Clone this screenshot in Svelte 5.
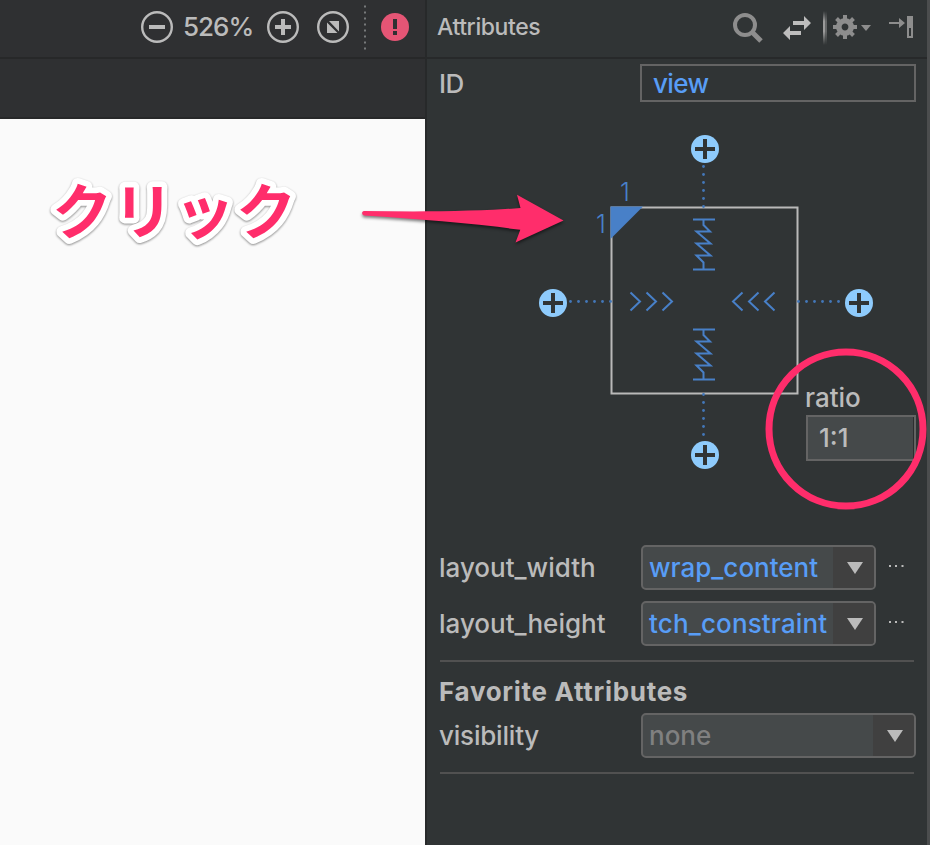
<script>
  const combos = [
    { label: 'layout_width', value: 'wrap_content' },
    { label: 'layout_height', value: 'tch_constraint' }
  ];
  const anchors = [[705, 149], [553, 303], [859, 303], [705, 455]];
  const steps = [0, 8, 16, 24, 32, 40];
  const dots = [
    ...steps.map((s) => [703.5, 166.5 + s]),
    ...steps.map((s) => [703.5, 394.5 + s]),
    ...steps.map((s) => [570.5 + s, 301.5]),
    ...steps.map((s) => [798.5 + s, 301.5])
  ];
  const teeth = [0, 45, 90, 135, 180, 225, 270, 315];
</script>

<div class="window">
  <section class="editor">
    <header class="tools">
      <svg width="32" height="32" viewBox="-16 -16 32 32">
        <circle r="14.8" class="ring" /><path d="M-8-2H8V2H-8z" fill="#bbb" />
      </svg>
      <span class="percent">526%</span>
      <svg width="32" height="32" viewBox="-16 -16 32 32">
        <circle r="14.8" class="ring" /><path d="M-8-2H-2V-8H2V-2H8V2H2V8H-2V2H-8z" fill="#bbb" />
      </svg>
      <svg class="fit" width="32" height="32" viewBox="-16 -16 32 32">
        <circle r="14.8" class="ring" /><path d="M-4-6H6V4.500zM-6-4.500V6H4.500z" fill="#bbb" />
      </svg>
      <svg class="sep" width="2" height="46"><path d="M1 1.500V46" stroke="#77797a" stroke-width="2" stroke-dasharray="2 4" /></svg>
      <svg class="error" width="28" height="28" viewBox="-14 -14 28 28">
        <circle r="14" fill="#e55575" /><path d="M-2-8H2V2H-2zM-2 4H2V8H-2z" fill="#2f3032" />
      </svg>
    </header>
    <div class="strip"></div>
    <div class="canvas"></div>
  </section>

  <section class="panel">
    <header class="title">
      <span class="heading">Attributes</span>
      <svg width="190" height="57" viewBox="727 0 190 57">
        <circle cx="745" cy="25" r="10" fill="none" stroke="#8d8d8d" stroke-width="4" />
        <path d="M752.500 32.500L761 41" stroke="#8d8d8d" stroke-width="5" />
        <path d="M793 21H804V16L811 23L804 30V25H793z M801 31H790V26L783 33L790 40V35H801z" fill="#bdbdbd" />
        <defs>
          <linearGradient id="fade" x1="0" y1="0" x2="0" y2="1">
            <stop offset="0" stop-color="#9b9b9b" stop-opacity="0" /><stop offset=".3" stop-color="#9b9b9b" />
            <stop offset=".6" stop-color="#9b9b9b" /><stop offset="1" stop-color="#9b9b9b" stop-opacity="0" />
          </linearGradient>
        </defs>
        <rect x="823" y="11" width="2" height="34" fill="url(#fade)" />
        <rect x="825" y="11" width="2" height="34" fill="url(#fade)" opacity=".5" />
        <g transform="translate(845 27)">
          <circle r="6.200" fill="none" stroke="#8d8d8d" stroke-width="5.600" />
          {#each teeth as a}<rect x="-2" y="-12" width="4" height="5" fill="#8d8d8d" transform="rotate({a})" />{/each}
        </g>
        <path d="M861 25H871L866 31z" fill="#8d8d8d" />
        <path d="M889 22H899V18L905 23L899 28V24H889z" fill="#8d8d8d" />
        <path d="M907 16H913V38H907zM909 28V36H911V28z" fill="#8d8d8d" fill-rule="evenodd" />
      </svg>
    </header>

    <div class="row id-row">
      <span class="label id">ID</span>
      <div class="field"><span>view</span></div>
    </div>

    <div class="inspector">
      <svg width="500" height="442" viewBox="427 102 500 442">
        <rect x="611.5" y="207.500" width="186" height="186" fill="none" stroke="#b9b9b9" stroke-width="2" />
        <path d="M610.500 206.500H643L610.500 239z" fill="#4880c8" />
        <text x="620" y="201" class="one">1</text>
        <text x="596" y="233" class="one">1</text>
        {#each dots as [x, y]}<circle cx={x} cy={y} r="1.400" fill="#4377b8" />{/each}
        {#each anchors as [x, y]}
          <g transform="translate({x} {y})">
            <circle r="14" fill="#8ecbfc" /><path d="M-10 0H10M0-10V10" stroke="#303435" stroke-width="4" />
          </g>
        {/each}
        {#each [0, 110] as dy}
          <path class="wire" transform="translate(0 {dy})" d="M693 219.500H715M703.500 219.500V225L710 231.500H696.500L710.500 243.500H696.500L710.500 255.500H696.500L703.500 262.500V269.500M693 269.500H715" />
        {/each}
        {#each [0, 16, 32] as dx}
          <path class="wire" d="M{630.5 + dx} 292.500L{640 + dx} 301.500L{630.5 + dx} 310.500" />
          <path class="wire" d="M{742.5 + dx} 292.500L{733 + dx} 301.500L{742.5 + dx} 310.500" />
        {/each}
      </svg>
      <div class="ratio">
        <span class="ratio-label">ratio</span>
        <div class="ratio-box">1:1</div>
      </div>
    </div>

    {#each combos as c}
      <div class="row combo-row">
        <span class="label">{c.label}</span>
        <div class="combo">
          <span class="value {c.value}">{c.value}</span>
          <span class="drop"><svg width="16" height="12"><path d="M0 0H16L8 12z" fill="#bbb" /></svg></span>
        </div>
        <svg class="more" width="15" height="2"><path d="M0 0H2V2H0zM6 0H8V2H6zM12.500 0H14.500V2H12.500z" fill="#bbb" /></svg>
      </div>
    {/each}

    <hr />
    <h2><span>Favorite Attributes</span></h2>
    <div class="row vis-row">
      <span class="label visibility">visibility</span>
      <div class="combo wide">
        <span class="value none">none</span>
        <span class="drop"><svg width="16" height="12"><path d="M0 0H16L8 12z" fill="#bbb" /></svg></span>
      </div>
    </div>
    <hr class="last" />
  </section>
  <div class="edge"></div>

  <svg class="notes" width="930" height="845">
    <text class="click" x="52" y="234">クリック</text>
    <path class="arrow" d="M364 211C420 212 480 211.500 520.500 208L517 194.800L563.500 220.500L515.500 242.500L520.300 229.700C470 223 420 219 364 215.500C361.500 215 361.500 211 364 211z" />
    <circle cx="846" cy="429" r="77" fill="none" stroke="#ff2d6b" stroke-width="7" />
  </svg>
</div>

<style>
  :global(body) { margin: 0; }
  .window {
    position: relative; display: flex; width: 930px; height: 845px; overflow: hidden;
    background: #303435; color: #bbb; font: 450 26px/32px Inter, "Noto Sans CJK JP", sans-serif;
  }
  svg { display: block; flex: none; }
  .editor { width: 425px; border-right: 2px solid #27292a; background: #2f3032; display: flex; flex-direction: column; }
  .tools { box-sizing: border-box; height: 59px; border-bottom: 2px solid #272829; padding: 0 0 3px 141px; display: flex; align-items: center; }
  .ring { fill: none; stroke: #bbb; stroke-width: 2.4; }
  .percent { width: 68px; margin: 0 16px 0 10px; white-space: nowrap; letter-spacing: -1px; }
  .fit { margin-left: 18px; }
  .sep { margin-left: 15px; }
  .error { margin-left: 15px; }
  .strip { height: 58px; border-bottom: 2px solid #272829; }
  .canvas { flex: 1; background: #fafafa; }

  .panel { width: 500px; display: flex; flex-direction: column; }
  .title { height: 57px; border-bottom: 2px solid #27292a; display: flex; justify-content: space-between; padding: 0 10px; }
  .heading { font-size: 23px; line-height: 54px; letter-spacing: -.4px; }
  .row { display: flex; padding-left: 12px; white-space: nowrap; }
  .label { width: 202px; flex: none; }
  .id-row { padding-top: 5px; height: 38px; }
  .id { width: 201px; line-height: 40px; letter-spacing: -.5px; }
  .field { box-sizing: border-box; width: 276px; height: 38px; border: 2px solid #646464; padding-left: 11px; line-height: 35px; color: #589df6; letter-spacing: -.6px; }
  .inspector { position: relative; height: 442px; }
  .one { font-size: 25px; font-weight: 300; fill: #4880c8; }
  .wire { fill: none; stroke: #4880c8; stroke-width: 2; }
  .ratio { position: absolute; left: 378px; top: 280px; }
  .ratio-label { display: block; height: 33px; }
  .ratio-box { box-sizing: border-box; width: 110px; height: 46px; margin-left: 1px; border: 2px solid #646464; box-shadow: inset -1px 0 #2c2e2f; background: #45494a; padding-left: 11px; line-height: 42px; }
  .combo-row { height: 56px; }
  .combo-row .label, .vis-row .label { line-height: 47px; }
  .combo { box-sizing: border-box; width: 235px; height: 45px; margin-top: 1px; border: 2px solid #646464; border-radius: 5px; background: #45494a; display: flex; justify-content: space-between; overflow: hidden; }
  .wide { width: 275px; }
  .value { padding-left: 6px; line-height: 41px; color: #589df6; }
  .tch_constraint { letter-spacing: .15px; }
  .drop { width: 41px; background: #404040; display: flex; align-items: center; padding-left: 14px; box-sizing: border-box; }
  .more { margin: 21px 0 0 13px; }
  .visibility { letter-spacing: -.2px; }
  .none { color: #808080; }
  hr { box-sizing: border-box; width: 474px; height: 2px; border: 0; background: #515151; margin: 4px 0 0 13px; flex: none; }
  h2 { margin: 0 0 0 12px; font-size: 26px; font-weight: 700; line-height: 32px; height: 36px; padding-top: 14px; white-space: nowrap; letter-spacing: .7px; }
  .vis-row { height: 47px; }
  .last { margin-top: 13px; }
  .edge { width: 3px; background: #4b4d4e; }
  .notes { position: absolute; inset: 0; }
  .click {
    font: 700 60.3px "Noto Sans CJK JP", sans-serif; letter-spacing: 1px; fill: #ff2d6b; stroke: #fff; stroke-width: 11.5px;
    stroke-linejoin: round; paint-order: stroke; filter: drop-shadow(0 1.5px 1.2px rgba(0, 0, 0, .45));
  }
  .arrow { fill: #ff2d6b; filter: drop-shadow(0 2px 1.5px rgba(0, 0, 0, .5)); }
</style>
